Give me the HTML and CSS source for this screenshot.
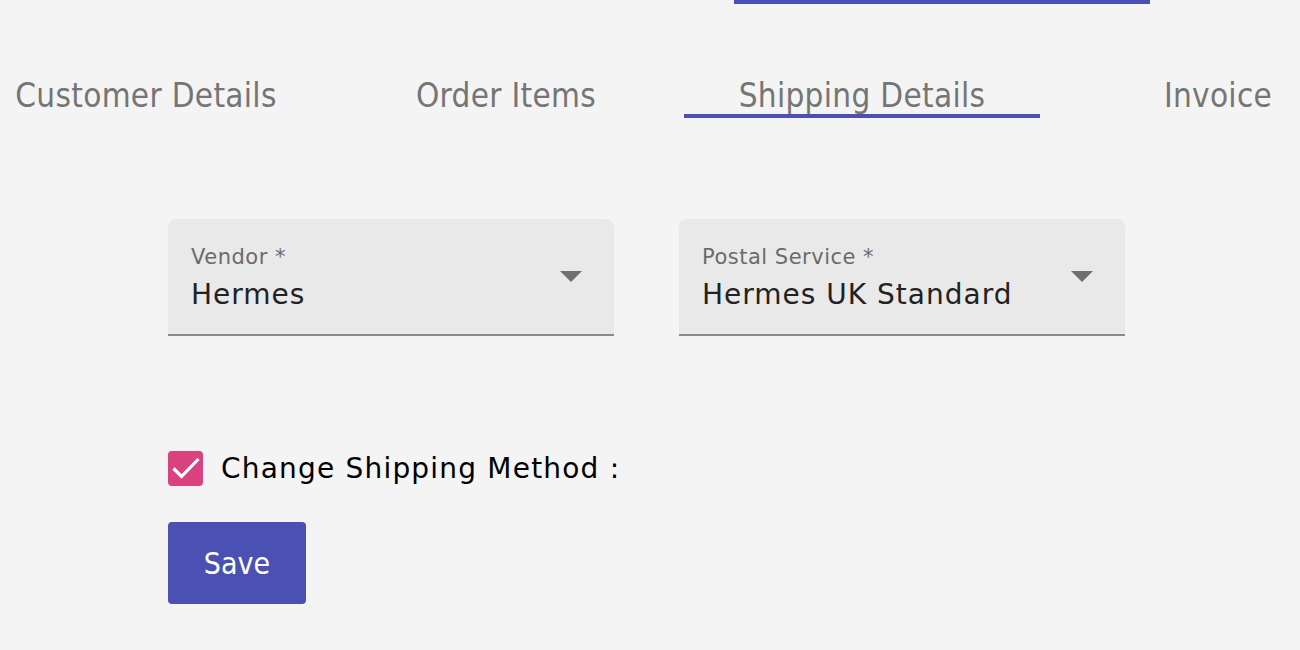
FILE: index.html
```html
<!DOCTYPE html>
<html>
<head>
<meta charset="utf-8">
<link rel="stylesheet" href="styles.css">
</head>
<body>
<div class="topbar"><div class="topbar-ink"></div></div>
<div class="tabs-wrap">
  <div class="tabs">
    <div class="tab">Customer Details</div>
    <div class="tab">Order Items</div>
    <div class="tab active">Shipping Details</div>
    <div class="tab">Invoice</div>
  </div>
</div>
<div class="content">
  <div class="fields">
    <div class="field">
      <div class="field-text">
        <div class="field-label">Vendor *</div>
        <div class="field-value">Hermes</div>
      </div>
      <div class="arrow"></div>
    </div>
    <div class="field">
      <div class="field-text">
        <div class="field-label">Postal Service *</div>
        <div class="field-value">Hermes UK Standard</div>
      </div>
      <div class="arrow"></div>
    </div>
  </div>
  <label class="check-row">
    <span class="checkbox">
      <svg viewBox="0 0 35 35" width="35" height="35"><path d="M5.5 17.5 L13.5 25.5 L30.5 8" fill="none" stroke="#fff" stroke-width="3.2"/></svg>
    </span>
    <span class="check-label">Change Shipping Method :</span>
  </label>
  <button class="save">Save</button>
</div>
</body>
</html>
```
FILE: styles.css
```css
html, body {
  margin: 0;
  padding: 0;
  background: #f4f4f4;
  font-family: "DejaVu Sans", sans-serif;
  overflow: hidden;
}
.topbar {
  height: 4px;
  padding-left: 734px;
}
.topbar-ink {
  width: 416px;
  height: 4px;
  background: #4a51b2;
}
.tabs-wrap {
  overflow: hidden;
  margin-top: 72px;
}
.tabs {
  display: flex;
  margin-left: -32px;
}
.tab {
  flex: 0 0 356px;
  text-align: center;
  font-family: "DejaVu Sans Condensed", "DejaVu Sans", sans-serif;
  font-size: 33px;
  letter-spacing: 0.3px;
  color: #757575;
  height: 42px;
  line-height: 39px;
  box-sizing: border-box;
}
.tab.active {
  border-bottom: 4px solid #4a51b2;
}
.tab:nth-child(2) { margin-left: 4px; }
.content {
  padding-left: 168px;
  padding-top: 101px;
}
.fields {
  display: flex;
  gap: 65px;
}
.field {
  width: 446px;
  height: 117px;
  box-sizing: border-box;
  background: #e9e9e9;
  border-radius: 8px 8px 0 0;
  border-bottom: 2px solid #8a8a8a;
  display: flex;
  align-items: flex-start;
  padding: 25px 32px 0 23px;
}
.field-text {
  flex: 1;
}
.field-label {
  font-size: 21px;
  color: #6b6b6b;
  line-height: 26px;
  letter-spacing: 0.5px;
}
.field-value {
  font-size: 28px;
  color: #222;
  line-height: 49px;
  letter-spacing: 1px;
}
.arrow {
  align-self: center;
  margin-top: -25px;
  width: 0;
  height: 0;
  border-left: 11px solid transparent;
  border-right: 11px solid transparent;
  border-top: 11px solid #707070;
}
.check-row {
  display: flex;
  align-items: center;
  margin-top: 115px;
  height: 35px;
}
.checkbox {
  width: 35px;
  height: 35px;
  background: #d9417f;
  border-radius: 4px;
  display: flex;
}
.check-label {
  margin-left: 18px;
  font-size: 28px;
  color: #000;
  letter-spacing: 1.2px;
}
.save {
  display: block;
  margin-top: 36px;
  width: 138px;
  height: 82px;
  background: #4a51b2;
  color: #fff;
  border: none;
  border-radius: 4px;
  font-family: "DejaVu Sans Condensed", "DejaVu Sans", sans-serif;
  font-size: 30px;
  padding: 0;
}
```
